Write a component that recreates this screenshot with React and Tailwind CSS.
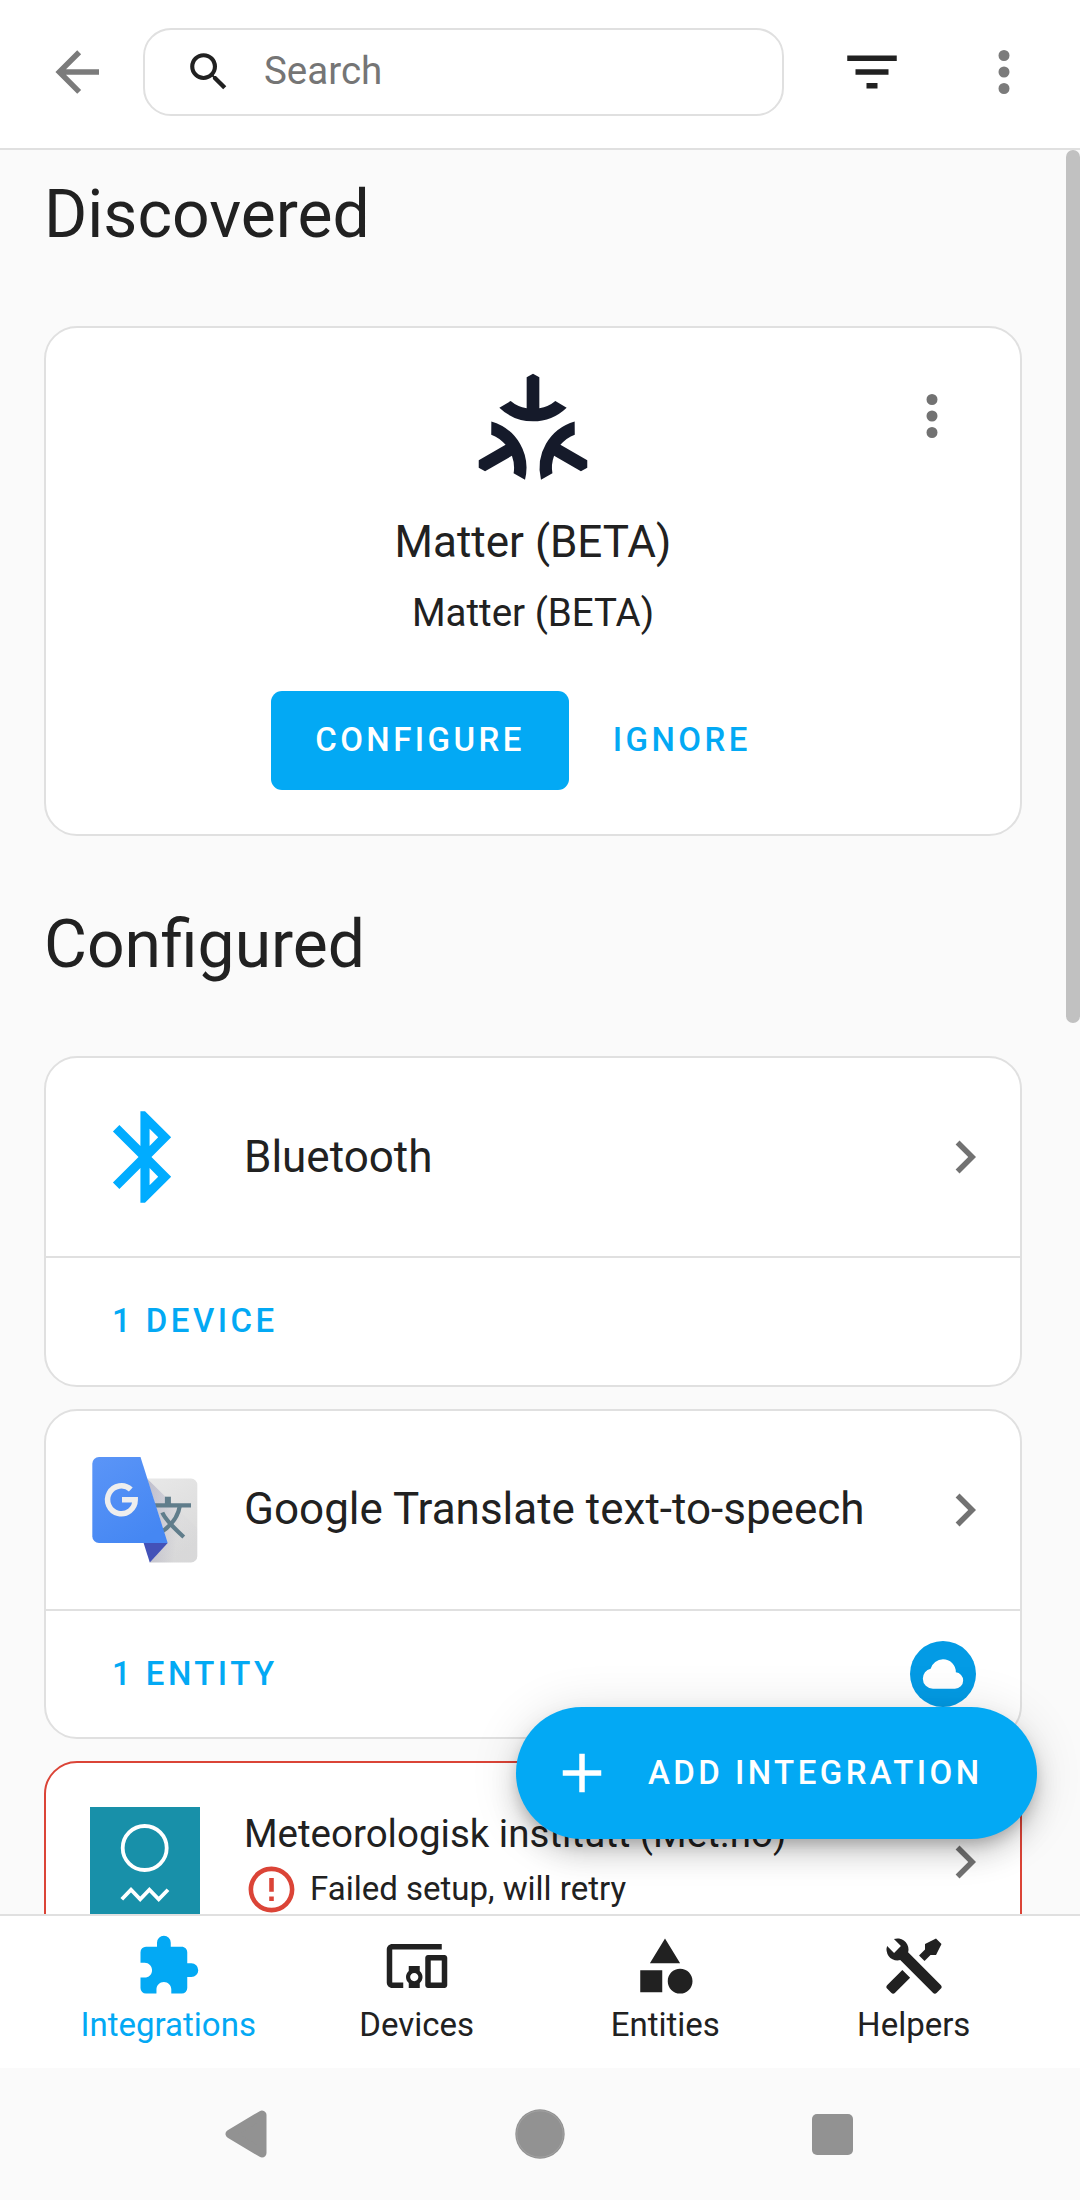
const PATHS = {
  back: "M20,11V13H8L13.5,18.5L12.08,19.92L4.16,12L12.08,4.08L13.5,5.5L8,11H20Z",
  magnify:
    "M9.5,3A6.5,6.5 0 0,1 16,9.5C16,11.11 15.41,12.59 14.44,13.73L14.71,14H15.5L20.5,19L19,20.5L14,15.5V14.71L13.73,14.44C12.59,15.41 11.11,16 9.5,16A6.5,6.5 0 0,1 3,9.5A6.5,6.5 0 0,1 9.5,3M9.5,5C7,5 5,7 5,9.5C5,12 7,14 9.5,14C12,14 14,12 14,9.5C14,7 12,5 9.5,5Z",
  filter: "M6,13H18V11H6M3,6V8H21V6M10,18H14V16H10V18Z",
  dots: "M12,16A2,2 0 0,1 14,18A2,2 0 0,1 12,20A2,2 0 0,1 10,18A2,2 0 0,1 12,16M12,10A2,2 0 0,1 14,12A2,2 0 0,1 12,14A2,2 0 0,1 10,12A2,2 0 0,1 12,10M12,4A2,2 0 0,1 14,6A2,2 0 0,1 12,8A2,2 0 0,1 10,6A2,2 0 0,1 12,4Z",
  bluetooth:
    "M14.88,16.29L13,18.17V14.41M13,5.83L14.88,7.71L13,9.58M17.71,7.71L12,2H11V9.58L6.41,5L5,6.41L10.59,12L5,17.58L6.41,19L11,14.41V22H12L17.71,16.29L13.41,12L17.71,7.71Z",
  chevron: "M8.59,16.58L13.17,12L8.59,7.41L10,6L16,12L10,18L8.59,16.58Z",
  cloud:
    "M6.5 20Q4.22 20 2.61 18.43 1 16.85 1 14.58 1 12.63 2.17 11.1 3.35 9.57 5.25 9.15 5.88 6.85 7.75 5.43 9.63 4 12 4 14.93 4 16.96 6.04 19 8.07 19 11 20.73 11.2 21.86 12.5 23 13.78 23 15.5 23 17.38 21.69 18.69 20.38 20 18.5 20Z",
  alert:
    "M11,15H13V17H11V15M11,7H13V13H11V7M12,2C6.47,2 2,6.5 2,12A10,10 0 0,0 12,22A10,10 0 0,0 22,12A10,10 0 0,0 12,2M12,20A8,8 0 0,1 4,12A8,8 0 0,1 12,4A8,8 0 0,1 20,12A8,8 0 0,1 12,20Z",
  plus: "M19,13H13V19H11V13H5V11H11V5H13V11H19V13Z",
  puzzle:
    "M20.5,11H19V7C19,5.89 18.1,5 17,5H13V3.5A2.5,2.5 0 0,0 10.5,1A2.5,2.5 0 0,0 8,3.5V5H4A2,2 0 0,0 2,7V10.8H3.5C5,10.8 6.2,12 6.2,13.5C6.2,15 5,16.2 3.5,16.2H2V20A2,2 0 0,0 4,22H7.8V20.5C7.8,19 9,17.8 10.5,17.8C12,17.8 13.2,19 13.2,20.5V22H17A2,2 0 0,0 19,20V16H20.5A2.5,2.5 0 0,0 23,13.5A2.5,2.5 0 0,0 20.5,11Z",
  devices:
    "M3 6H21V4H3C1.9 4 1 4.9 1 6V18C1 19.1 1.9 20 3 20H7V18H3V6M13 12H9V13.78C8.39 14.33 8 15.11 8 16C8 16.89 8.39 17.67 9 18.22V20H13V18.22C13.61 17.67 14 16.88 14 16S13.61 14.33 13 13.78V12M11 17.5C10.17 17.5 9.5 16.83 9.5 16S10.17 14.5 11 14.5 12.5 15.17 12.5 16 11.83 17.5 11 17.5M22 8H16C15.5 8 15 8.5 15 9V19C15 19.5 15.5 20 16 20H22C22.5 20 23 19.5 23 19V9C23 8.5 22.5 8 22 8M21 18H17V10H21V18Z",
  shapes:
    "M11,13.5V21.5H3V13.5H11M12,2L17.5,11H6.5L12,2M17.5,13C20,13 22,15 22,17.5C22,20 20,22 17.5,22C15,22 13,20 13,17.5C13,15 15,13 17.5,13Z",
  tools:
    "M21.71 20.29L20.29 21.71A1 1 0 0 1 18.88 21.71L7 9.85A3.81 3.81 0 0 1 6 10A4 4 0 0 1 2.22 4.7L4.76 7.24L5.29 6.71L6.71 5.29L7.24 4.76L4.7 2.22A4 4 0 0 1 10 6A3.81 3.81 0 0 1 9.85 7L21.71 18.88A1 1 0 0 1 21.71 20.29M2.29 18.88A1 1 0 0 0 2.29 20.29L3.71 21.71A1 1 0 0 0 5.12 21.71L10.59 16.25L7.76 13.42M20 2L16 4V6L13.83 8.17L15.83 10.17L18 8H20L22 4Z",
};

function Icon({ name, className = "size-[66px]" }) {
  return (
    <svg viewBox="0 0 24 24" fill="currentColor" className={`shrink-0 ${className}`}>
      <path d={PATHS[name]} />
    </svg>
  );
}

function MatterLogo() {
  const arm =
    "M519 161L538 172V265Q566 260 586 243L620 263Q577 304 519 304Q461 304 418 263L452 243Q472 260 500 265V172Z";
  return (
    <svg viewBox="354 156 330 330" className="mt-11 size-[110px] shrink-0" fill="#151a2a">
      <path d={arm} />
      <path d={arm} transform="rotate(120 519 349)" />
      <path d={arm} transform="rotate(240 519 349)" />
    </svg>
  );
}

function TranslateLogo() {
  return (
    <svg viewBox="90 1455 110 110" className="size-[110px] shrink-0">
      <defs>
        <linearGradient id="page" x1="0" y1="0" x2="0.6" y2="1">
          <stop offset="0" stopColor="#5b95f7" />
          <stop offset="1" stopColor="#4587f3" />
        </linearGradient>
        <linearGradient id="sheet" x1="0" y1="0" x2="0.4" y2="1">
          <stop offset="0" stopColor="#e8e8e8" />
          <stop offset="1" stopColor="#dadada" />
        </linearGradient>
        <linearGradient id="fold" x1="0" y1="0.2" x2="1" y2="0.5">
          <stop offset="0" stopColor="#262268" stopOpacity="0.4" />
          <stop offset="0.7" stopColor="#262268" stopOpacity="0.02" />
        </linearGradient>
      </defs>
      <path d="M146 1478.5H191A6.3 6.3 0 0 1 197.3 1485V1556A6.3 6.3 0 0 1 191 1562.5H149.8Z" fill="url(#sheet)" />
      <path d="M147 1478.5L197.3 1528V1556A6.3 6.3 0 0 1 191 1562.5H149.8L167.7 1543Z" fill="url(#fold)" opacity="0.5" />
      <g fill="none" stroke="#607d8b" strokeWidth="4.2">
        <path d="M155 1505.3H191" />
        <path d="M167.9 1496.7V1505" strokeWidth="6" />
        <path d="M179.8 1506C178 1517 171 1526 160 1533" />
        <path d="M162.3 1512.5C166 1521 175 1529 183.8 1537" />
      </g>
      <path d="M99 1457H140.5L167.7 1543H99A6.7 6.7 0 0 1 92.3 1536.3V1463.7A6.7 6.7 0 0 1 99 1457Z" fill="url(#page)" />
      <path d="M143.6 1543H167.7L149.8 1562.5Z" fill="#4352b8" />
      <path d="M130.8 1489.5A13.8 14 0 1 0 135.2 1499.8H122" fill="none" stroke="#eeeeee" strokeWidth="5.5" />
    </svg>
  );
}

function MetLogo() {
  return (
    <svg viewBox="0 0 110 110" className="size-[110px] shrink-0 bg-[#1890a9]" fill="none" stroke="#fff" strokeWidth="3.8">
      <circle cx="54.7" cy="41" r="22" />
      <path d="M31.8 92.3L41 82.7L50.2 92.3L59.4 82.7L68.7 92.3L78 82.7" />
    </svg>
  );
}

function ConfiguredCard({ logo, title, action, cloud, className, titleClassName = "" }) {
  return (
    <section className={`flex shrink-0 flex-col rounded-[33px] border-2 border-[#e0e0e0] bg-white ${className}`}>
      <div className="flex h-[198px] items-center gap-11 pr-[22px] pl-11">
        {logo}
        <h2 className={`flex-1 text-[44px] leading-[66px] ${titleClassName}`}>{title}</h2>
        <Icon name="chevron" className="size-[66px] text-[#727272]" />
      </div>
      <div className="flex h-[128px] items-center justify-between border-t-2 border-[#e0e0e0] pr-11 pl-[66px]">
        <span className="text-[33px] leading-[40px] font-medium tracking-[3.4375px] text-[#03a9f4]">{action}</span>
        {cloud && (
          <span className="flex size-[66px] items-center justify-center rounded-full bg-[#039be5] text-white">
            <Icon name="cloud" className="size-[44px]" />
          </span>
        )}
      </div>
    </section>
  );
}

const TABS = [
  { icon: "puzzle", label: "Integrations", active: true },
  { icon: "devices", label: "Devices" },
  { icon: "shapes", label: "Entities" },
  { icon: "tools", label: "Helpers" },
];

export default function App() {
  return (
    <div className="flex h-[2200px] w-[1080px] flex-col overflow-hidden bg-[#fafafa] font-['Roboto',sans-serif] text-[#212121]">
      <header className="flex h-[150px] shrink-0 items-start border-b-2 border-[#e0e0e0] bg-white pl-11">
        <Icon name="back" className="mt-[39px] size-[66px] text-[#7b7b7b]" />
        <div className="mt-7 ml-[33px] flex h-[88px] w-[641px] items-center rounded-[28px] border-2 border-[#e0e0e0] pl-[39px]">
          <Icon name="magnify" className="size-[49.5px]" />
          <span className="-mt-[2px] ml-[30.5px] text-[38.5px] leading-[44px] text-[#757575]">Search</span>
        </div>
        <Icon name="filter" className="mt-[39px] ml-[55px] size-[66px]" />
        <Icon name="dots" className="mt-[39px] ml-[66px] size-[66px] text-[#7b7b7b]" />
      </header>

      <main className="relative flex h-[1764px] shrink-0 flex-col overflow-hidden pr-[58px] pl-11">
        <h1 className="h-[176px] shrink-0 text-[66px] leading-[129px]">Discovered</h1>
        <section className="relative flex h-[510px] shrink-0 flex-col items-center rounded-[33px] border-2 border-[#e0e0e0] bg-white pb-11">
          <MatterLogo />
          <h2 className="mt-[27px] text-[44px] leading-[66px]">Matter (BETA)</h2>
          <h3 className="mt-[9px] text-[38.5px] leading-[58px]">Matter (BETA)</h3>
          <div className="mt-auto flex h-[99px] text-[33px] leading-[97px] font-medium tracking-[3.4375px]">
            <button className="rounded-[11px] bg-[#03a9f4] px-11 pb-[2px] text-white">CONFIGURE</button>
            <button className="px-11 pb-[2px] text-[#03a9f4]">IGNORE</button>
          </div>
          <div className="absolute top-[55px] right-[55px] text-[#727272]">
            <Icon name="dots" />
          </div>
        </section>

        <h1 className="mt-11 h-[176px] shrink-0 text-[66px] leading-[129px]">Configured</h1>
        <ConfiguredCard
          className="h-[331px]"
          logo={<Icon name="bluetooth" className="size-[110px] text-[#00acff]" />}
          title="Bluetooth"
          action="1 DEVICE"
        />
        <ConfiguredCard
          className="mt-[22px] h-[330px]"
          titleClassName="-mt-[2px]"
          logo={<TranslateLogo />}
          title="Google Translate text-to-speech"
          action="1 ENTITY"
          cloud
        />
        <section className="mt-[22px] h-[331px] shrink-0 rounded-[33px] border-2 border-[#db4437] bg-white">
          <div className="flex h-[198px] items-center gap-11 pr-[22px] pl-11">
            <MetLogo />
            <div className="flex-1">
              <h2 className="mb-[2px] text-[38.5px] leading-[52px]">Meteorologisk institutt (Met.no)</h2>
              <div className="flex h-[55px] items-center gap-[11px]">
                <Icon name="alert" className="size-[55px] text-[#db4437]" />
                <span className="-mt-[2px] text-[33px] leading-[55px]">Failed setup, will retry</span>
              </div>
            </div>
            <Icon name="chevron" className="size-[66px] text-[#727272]" />
          </div>
        </section>

        <button className="absolute top-[1557px] left-[516px] flex h-[132px] w-[521px] items-center rounded-full bg-[#03a9f4] pl-[33px] text-[33px] font-medium tracking-[3.4375px] text-white shadow-[0_8px_14px_-3px_rgba(0,0,0,0.2),0_16px_28px_0_rgba(0,0,0,0.14),0_3px_50px_0_rgba(0,0,0,0.12)]">
          <Icon name="plus" />
          <span className="ml-[33px] whitespace-nowrap">ADD INTEGRATION</span>
        </button>
        <div className="absolute top-0 right-0 h-[873px] w-[14px] rounded-full bg-[#c1c1c1]" />
      </main>

      <nav className="grid h-[154px] shrink-0 grid-cols-4 border-t-2 border-[#e0e0e0] bg-white pr-[42px] pl-11">
        {TABS.map((tab) => (
          <div
            key={tab.label}
            className={`flex flex-col items-center pt-[17px] ${tab.active ? "text-[#03a9f4]" : "text-[#212121]"}`}
          >
            <Icon name={tab.icon} />
            <span className="mt-[6px] text-[33px] leading-[40px]">{tab.label}</span>
          </div>
        ))}
      </nav>

      <footer className="flex h-[132px] items-center pl-[225px]">
        <svg viewBox="0 0 43 48" className="h-[48px] w-[43px]">
          <path d="M5 24L37 5V43Z" fill="#929292" stroke="#929292" strokeWidth="9" strokeLinejoin="round" />
        </svg>
        <svg viewBox="0 0 50 50" className="ml-[247px] size-[50px]">
          <circle cx="25" cy="25" r="24.7" fill="#929292" />
          <circle cx="25" cy="25" r="23.2" fill="none" stroke="#a8a8a8" strokeWidth="0.7" />
        </svg>
        <div className="ml-[247px] size-[41px] rounded-[5px] bg-[#929292]" />
      </footer>
    </div>
  );
}
